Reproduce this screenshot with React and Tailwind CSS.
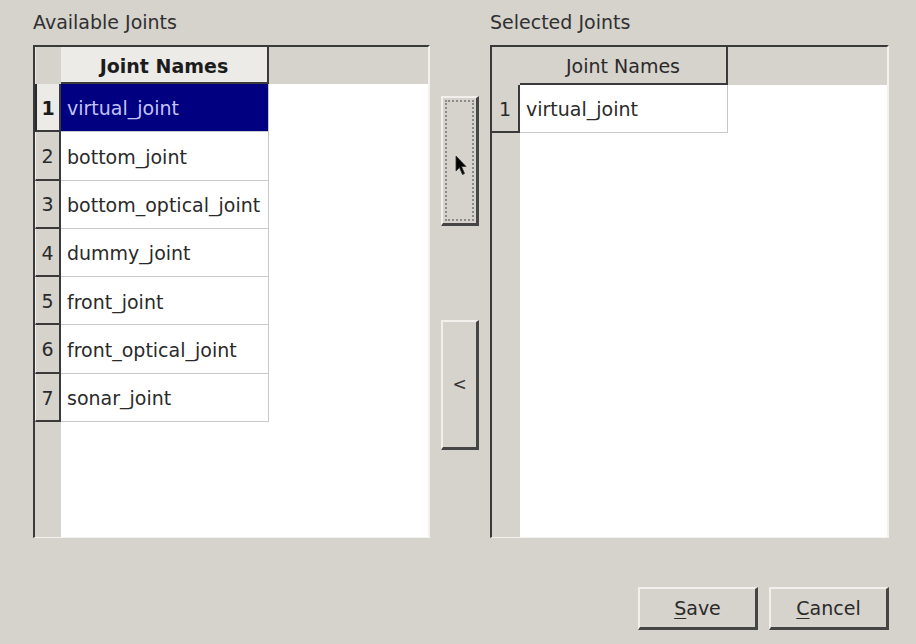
import React from "react";

const available = [
  "virtual_joint",
  "bottom_joint",
  "bottom_optical_joint",
  "dummy_joint",
  "front_joint",
  "front_optical_joint",
  "sonar_joint",
];

function LeftTable() {
  return (
    <div className="flex h-[493px] w-[397px] flex-col border-l-2 border-t-2 border-b border-r-2 border-l-[#3a3a3a] border-t-[#3a3a3a] border-b-[#f4f2ef] border-r-[#f4f2ef]">
      {/* header */}
      <div className="flex h-[37px] shrink-0 bg-[#d6d2cc]">
        <div className="w-[26px] shrink-0 border-l border-l-[#ece9e5]" />
        <div className="flex w-[208px] items-center justify-center border-b-2 border-r-2 border-b-[#3a3a3a] border-r-[#3a3a3a] bg-[#ecebe8] pt-[3px] font-bold text-[#1c1c1c]">
          Joint Names
        </div>
        <div className="flex-1" />
      </div>
      {/* body */}
      <div className="flex flex-1">
        <div className="flex w-[26px] shrink-0 flex-col bg-[#d6d2cc]">
          {available.map((_, i) => (
            <div
              key={i}
              className={
                "flex h-[48.3px] items-center justify-center border-b-2 border-r-2 border-b-[#3a3a3a] border-r-[#3a3a3a] pt-[2px] " +
                (i === 0
                  ? "border-l-2 border-l-[#2a2a2a] bg-[#ecebe8] font-bold text-[#1c1c1c]"
                  : "border-l border-l-[#f2f0ed] text-[#2a2a2a]")
              }
            >
              {i + 1}
            </div>
          ))}
        </div>
        <div className="flex flex-1 flex-col bg-white">
          {available.map((name, i) => (
            <div key={name} className="flex h-[48.3px]">
              <div
                className={
                  "flex w-[208px] items-center border-b border-r border-[#c9c9c9] pl-[6px] pt-[2px] " +
                  (i === 0 ? "bg-[#000080] text-[#c4c4f6]" : "text-[#2a2a2a]")
                }
              >
                {name}
              </div>
            </div>
          ))}
        </div>
      </div>
    </div>
  );
}

function RightTable() {
  return (
    <div className="flex h-[493px] w-[399px] flex-col border-l-2 border-t-2 border-b border-r-2 border-l-[#3a3a3a] border-t-[#3a3a3a] border-b-[#f4f2ef] border-r-[#f4f2ef]">
      <div className="flex h-[38px] shrink-0 bg-[#d6d2cc]">
        <div className="w-[28px] shrink-0" />
        <div className="flex w-[208px] items-center justify-center border-b-2 border-r-2 border-b-[#3a3a3a] border-r-[#3a3a3a] pt-[3px] text-[#2a2a2a]">
          Joint Names
        </div>
        <div className="flex-1" />
      </div>
      <div className="flex flex-1">
        <div className="flex w-[28px] shrink-0 flex-col bg-[#d6d2cc]">
          <div className="flex h-[48px] items-center justify-center border-b-2 border-r-2 border-b-[#3a3a3a] border-r-[#3a3a3a] pt-[2px] text-[#2a2a2a]">
            1
          </div>
        </div>
        <div className="flex flex-1 flex-col bg-white">
          <div className="flex h-[48px]">
            <div className="flex w-[208px] items-center border-b border-r border-[#c9c9c9] pl-[6px] pt-[2px] text-[#2a2a2a]">
              virtual_joint
            </div>
          </div>
        </div>
      </div>
    </div>
  );
}

function Cursor() {
  return (
    <svg width="14" height="22" viewBox="0 0 14 22" className="absolute left-[12px] top-[57px]">
      <path d="M1 1 L1 16 L4.5 12.5 L7.5 19.5 L9.5 18.5 L6.5 11.5 L11 11.5 Z" fill="#000" stroke="#333" strokeWidth="0.8" />
    </svg>
  );
}

export default function App() {
  return (
    <div
      className="flex h-[644px] w-[916px] flex-col overflow-hidden bg-[#d6d2cc] pl-[33px] pt-[10px] text-[19px] text-[#2a2a2a]"
      style={{ fontFamily: '"DejaVu Sans", Verdana, sans-serif' }}
    >
      <div className="flex h-[35px] items-start leading-[24px] text-[#303030]">
        <div className="w-[457px]">Available Joints</div>
        <div>Selected Joints</div>
      </div>
      <div className="flex">
        <LeftTable />
        <div className="ml-[11px] flex w-[38px] flex-col pt-[51px]">
          <div className="relative h-[130px] border-l-2 border-t-2 border-b-[3px] border-r-[3px] border-l-[#f2f0ed] border-t-[#f2f0ed] border-b-[#454545] border-r-[#454545] bg-[#d6d2cc] p-[2px]">
            <div className="h-full w-full border-2 border-dotted border-[#8a8a8a]" />
            <Cursor />
          </div>
          <div className="mt-[94px] flex h-[130px] items-center justify-center border-l-2 border-t-2 border-b-[3px] border-r-[3px] border-l-[#f2f0ed] border-t-[#f2f0ed] border-b-[#454545] border-r-[#454545] bg-[#d6d2cc] text-[17px] text-[#333]">
            &lt;
          </div>
        </div>
        <div className="ml-[11px]">
          <RightTable />
        </div>
      </div>
      <div className="mt-[49px] flex justify-end gap-[11px] pr-[27px]">
        <div className="flex h-[43px] w-[120px] items-center justify-center border-l-2 border-t-2 border-b-[3px] border-r-[3px] border-l-[#f2f0ed] border-t-[#f2f0ed] border-b-[#454545] border-r-[#454545] text-[#2a2a2a]">
          <span>
            <span className="underline underline-offset-[3px]">S</span>ave
          </span>
        </div>
        <div className="flex h-[43px] w-[120px] items-center justify-center border-l-2 border-t-2 border-b-[3px] border-r-[3px] border-l-[#f2f0ed] border-t-[#f2f0ed] border-b-[#454545] border-r-[#454545] text-[#2a2a2a]">
          <span>
            <span className="underline underline-offset-[3px]">C</span>ancel
          </span>
        </div>
      </div>
    </div>
  );
}
